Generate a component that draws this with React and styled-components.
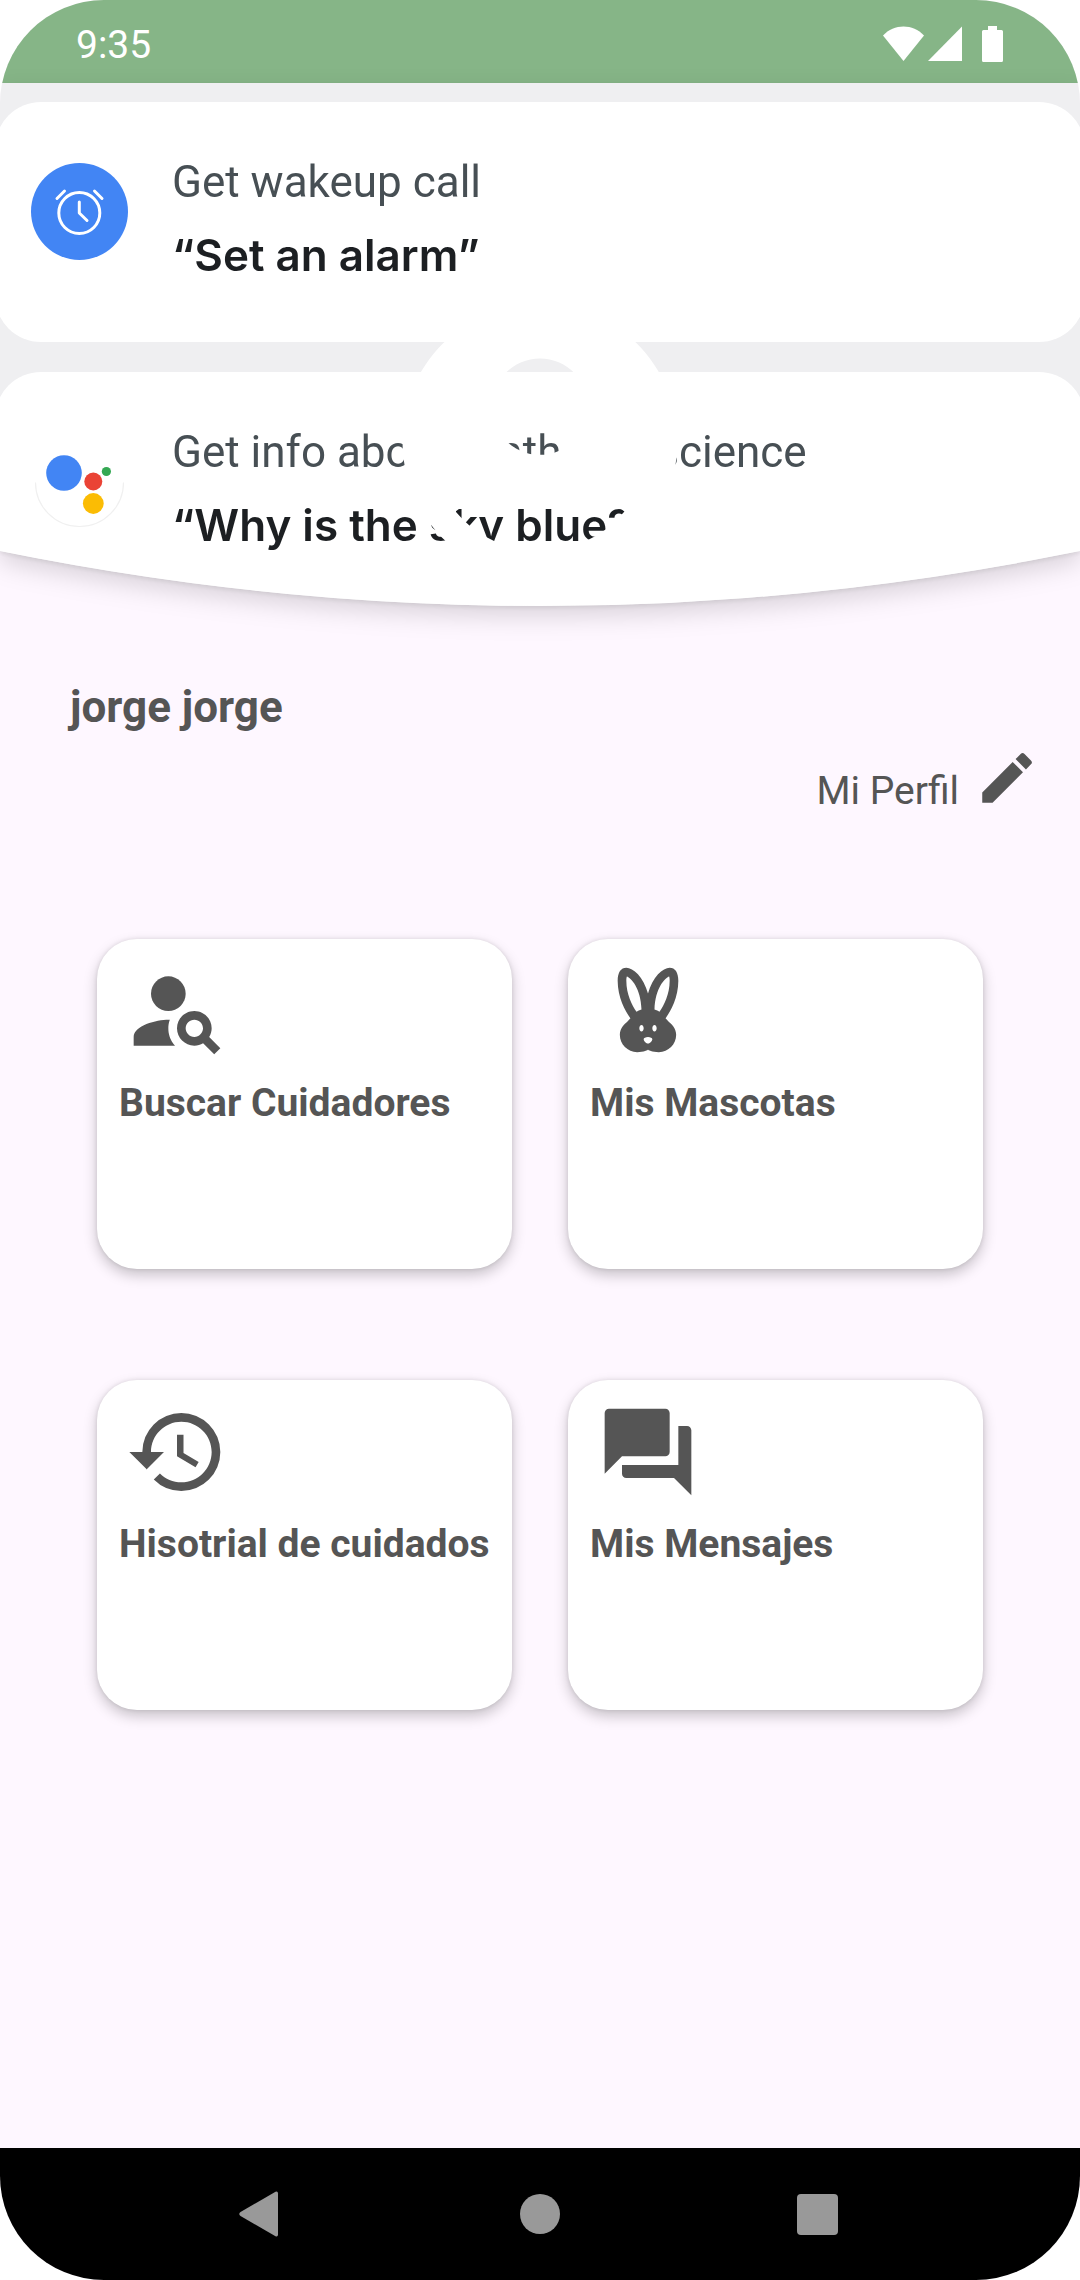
import React from "react";
import styled, { createGlobalStyle } from "styled-components";
import {
  MdAccountCircle,
  MdCrueltyFree,
  MdEdit,
  MdForum,
  MdHistory,
  MdPersonSearch,
} from "react-icons/md";

const GlobalStyle = createGlobalStyle`
  *, *::before, *::after { box-sizing: border-box; }
  body { margin: 0; background: #ffffff; }
  h1, h2, p { margin: 0; }
  button { border: 0; padding: 0; font: inherit; color: inherit; cursor: pointer; }
`;

const Screen = styled.div`
  display: flex;
  flex-direction: column;
  min-height: 100vh;
  overflow: hidden;
  border-radius: 104px;
  background: #fef7ff;
  color: #555555;
  font-family: Roboto, "Liberation Sans", sans-serif;
`;

const StatusBar = styled.div`
  display: flex;
  align-items: center;
  justify-content: space-between;
  height: 83px;
  padding: 6px 76px 0;
  background: #86b587;
  color: #ffffff;
`;

const Clock = styled.time`
  font-size: 39px;
  line-height: 46px;
`;

const HeaderShadow = styled.header`
  filter: drop-shadow(0 2px 2px rgba(0, 0, 0, 0.08))
    drop-shadow(0 10px 12px rgba(0, 0, 0, 0.14));
`;

const HeaderBody = styled.div`
  position: relative;
  display: flex;
  flex-direction: column;
  gap: 30px;
  height: 523px;
  padding-top: 19px;
  background: #efeff1;
  clip-path: url(#curved-bottom);
`;

const ClipDefs = styled.svg`
  position: absolute;
  width: 0;
  height: 0;
`;

const Suggestion = styled.article`
  display: flex;
  flex-shrink: 0;
  gap: 44px;
  height: 240px;
  margin: 0 -5px;
  padding: 44px 36px;
  border-radius: 46px;
  background: #ffffff;
  white-space: nowrap;
`;

const SuggestionIcon = styled.svg`
  width: 97px;
  height: 97px;
  margin-top: 17px;
`;

const SuggestionTitle = styled.p`
  color: #474f54;
  font-size: 44px;
  line-height: 73px;
`;

const SuggestionQuote = styled(SuggestionTitle)`
  color: #1c1f22;
  font-family: Inter, Roboto, sans-serif;
  font-weight: 600;
`;

const Avatar = styled(MdAccountCircle)`
  position: absolute;
  top: 193px;
  left: 50%;
  width: 330px;
  height: 330px;
  transform: translateX(-50%);
  color: #ffffff;
`;

const Main = styled.main`
  flex: 1;
  padding: 75px 0 80px;
`;

const UserName = styled.h1`
  padding: 0 70px;
  font-size: 44px;
  font-weight: 700;
  line-height: 52px;
`;

const ProfileRow = styled.div`
  display: flex;
  justify-content: flex-end;
  padding: 12px 40px 0;
`;

const ProfileLink = styled.a`
  display: flex;
  align-items: flex-end;
  gap: 15px;
  color: inherit;
  font-size: 39px;
  line-height: 46px;
  text-decoration: none;

  svg {
    width: 66px;
    height: 66px;
    margin-bottom: 3px;
  }
`;

const Menu = styled.nav`
  display: grid;
  grid-template-columns: 1fr 1fr;
  gap: 111px 56px;
  padding: 125px 97px 0;
`;

const MenuCard = styled.button`
  display: flex;
  flex-direction: column;
  align-items: flex-start;
  height: 330px;
  border-radius: 40px;
  background: #ffffff;
  box-shadow: 0 0 4px rgba(0, 0, 0, 0.1), 0 6px 14px rgba(0, 0, 0, 0.22);

  svg {
    width: 104px;
    height: 104px;
    margin: 20px 28px 0;
  }
`;

const MenuLabel = styled.span`
  padding: 17px 22px 0;
  font-size: 39px;
  font-weight: 700;
  line-height: 46px;
  white-space: nowrap;
`;

const NavBar = styled.footer`
  display: grid;
  grid-template-columns: repeat(3, 1fr);
  height: 132px;
  padding: 0 124px;
  background: #000000;
`;

const NavButton = styled.button`
  display: grid;
  place-items: center;
  background: transparent;
  color: #999999;
`;

const menu = [
  { label: "Buscar Cuidadores", Icon: MdPersonSearch },
  { label: "Mis Mascotas", Icon: MdCrueltyFree },
  { label: "Hisotrial de cuidados", Icon: MdHistory },
  { label: "Mis Mensajes", Icon: MdForum },
];

function StatusIcons() {
  return (
    <svg width="122" height="38" viewBox="882 25 122 38" fill="#ffffff" aria-hidden="true">
      <path d="M883 34.5C894 22.500 913 22.500 924 34.500L903.500 60Z" />
      <path d="M962 25.500V60H928Z" />
      <path d="M988 25h9v4h4.500q1.500 0 1.500 1.500v29q0 1.500-1.500 1.500h-18q-1.500 0-1.500-1.500v-29q0-1.500 1.500-1.500h4.500z" />
    </svg>
  );
}

function AlarmIcon() {
  return (
    <SuggestionIcon viewBox="0 0 97 97" aria-hidden="true">
      <circle cx="48.500" cy="48.500" r="48.500" fill="#4285f4" />
      <g fill="none" stroke="#ffffff" strokeWidth="3" strokeLinecap="round" strokeLinejoin="round">
        <circle cx="48.300" cy="50" r="20.500" />
        <path d="M48.300 39V50L56 57.500M26 35.500L33.500 28M63.500 28L71 35.500" />
      </g>
    </SuggestionIcon>
  );
}

function AssistantIcon() {
  return (
    <SuggestionIcon viewBox="0 0 97 97" aria-hidden="true">
      <path d="M4.500 49.500a44 44 0 0 0 88 0" fill="none" stroke="#f0f0f0" strokeWidth="1.200" />
      <circle cx="33" cy="40" r="17.800" fill="#4285f4" />
      <circle cx="62.300" cy="48.500" r="9" fill="#ea4335" />
      <circle cx="75.400" cy="38.500" r="4.600" fill="#34a853" />
      <circle cx="62.300" cy="70.500" r="10.400" fill="#fbbc04" />
    </SuggestionIcon>
  );
}

export default function App() {
  return (
    <>
      <GlobalStyle />
      <Screen>
        <StatusBar>
          <Clock>9:35</Clock>
          <StatusIcons />
        </StatusBar>
        <HeaderShadow>
          <ClipDefs aria-hidden="true">
            <clipPath id="curved-bottom" clipPathUnits="objectBoundingBox">
              <path d="M0 0H1V0.895Q0.5 1.105 0 0.895Z" />
            </clipPath>
          </ClipDefs>
          <HeaderBody>
            <Suggestion>
              <AlarmIcon />
              <div>
                <SuggestionTitle>Get wakeup call</SuggestionTitle>
                <SuggestionQuote>“Set an alarm”</SuggestionQuote>
              </div>
            </Suggestion>
            <Suggestion>
              <AssistantIcon />
              <div>
                <SuggestionTitle>Get info about math and science</SuggestionTitle>
                <SuggestionQuote>“Why is the sky blue?”</SuggestionQuote>
              </div>
            </Suggestion>
            <Avatar aria-hidden="true" />
          </HeaderBody>
        </HeaderShadow>
        <Main>
          <UserName>jorge jorge</UserName>
          <ProfileRow>
            <ProfileLink href="#perfil">
              Mi Perfil
              <MdEdit aria-hidden="true" />
            </ProfileLink>
          </ProfileRow>
          <Menu>
            {menu.map(({ label, Icon }) => (
              <MenuCard key={label} type="button">
                <Icon aria-hidden="true" />
                <MenuLabel>{label}</MenuLabel>
              </MenuCard>
            ))}
          </Menu>
        </Main>
        <NavBar>
          <NavButton type="button" aria-label="Back">
            <svg width="48" height="48" viewBox="0 0 48 48" fill="currentColor" aria-hidden="true">
              <path d="M36.500 1.800Q39 1 39 3.500V44.500Q39 47 36.500 46.200L1.500 26Q-1 24 1.500 22Z" />
            </svg>
          </NavButton>
          <NavButton type="button" aria-label="Home">
            <svg width="40" height="40" viewBox="0 0 40 40" fill="currentColor" aria-hidden="true">
              <circle cx="20" cy="20" r="20" />
            </svg>
          </NavButton>
          <NavButton type="button" aria-label="Recents">
            <svg width="41" height="41" viewBox="0 0 41 41" fill="currentColor" aria-hidden="true">
              <rect width="41" height="41" rx="4" />
            </svg>
          </NavButton>
        </NavBar>
      </Screen>
    </>
  );
}
